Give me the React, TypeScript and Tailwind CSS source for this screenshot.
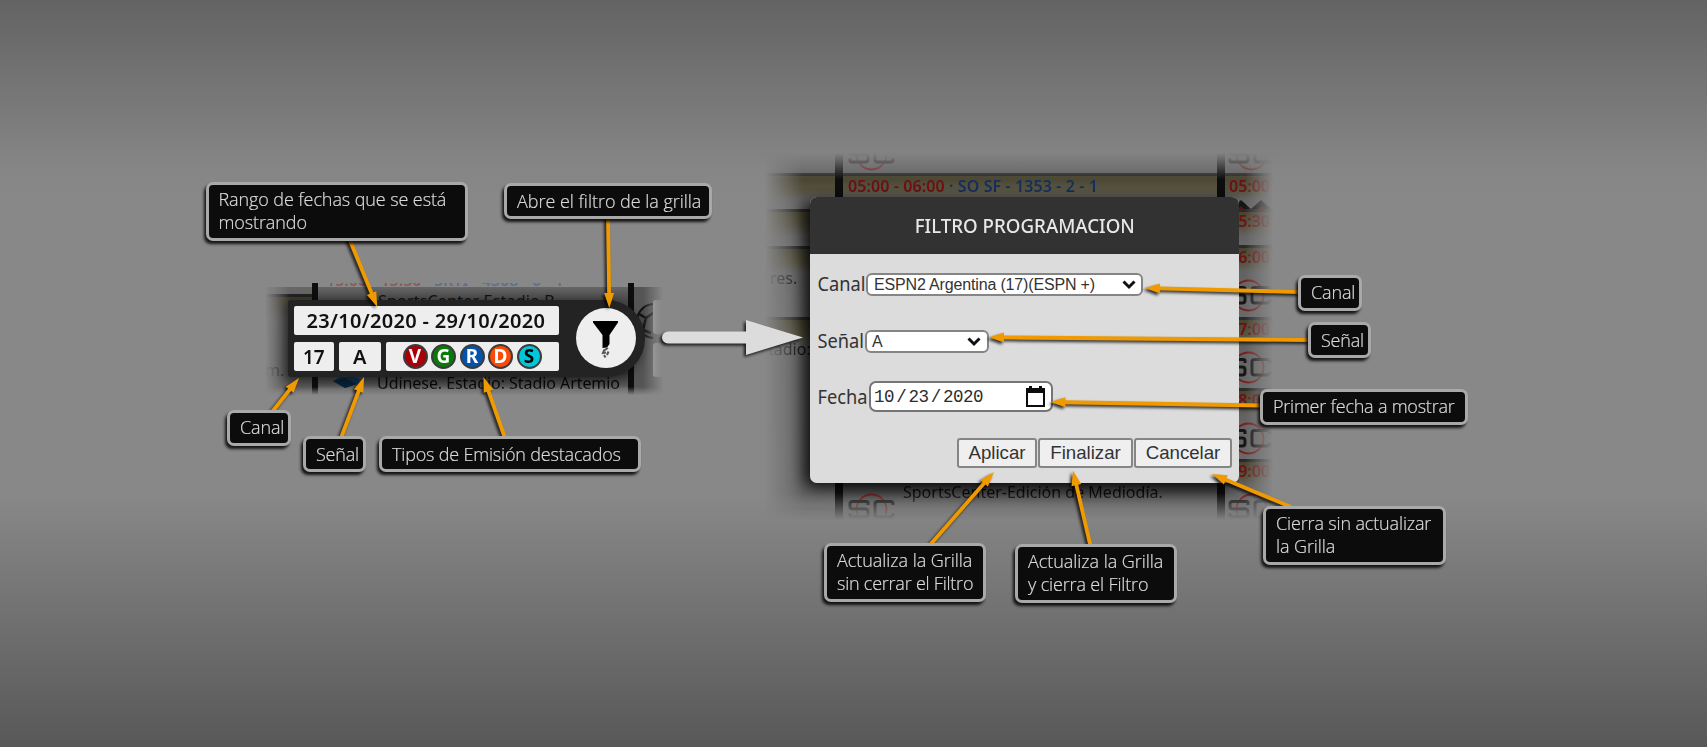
import type { ReactNode } from 'react';

const GRID_FONT = "font-['Noto_Sans',sans-serif]";

function Callout({ box, lines }: { box: string; lines: [string, string][] }) {
  return (
    <div
      className={`absolute overflow-hidden whitespace-nowrap rounded-[7px] border-[3px] border-[#a9a9a9] bg-[#0c0c0c] pl-[10px] font-['Open_Sans',sans-serif] text-[18px] font-light leading-[23px] text-[#dadada] [-webkit-text-stroke:0.2px_#dadada] shadow-[-2px_3px_3px_rgba(0,0,0,0.85)] ${box}`}
    >
      {lines.map(([text, tracking]) => (
        <p key={text} className={tracking}>
          {text}
        </p>
      ))}
    </div>
  );
}

function Arrow({ x1, y1, x2, y2 }: { x1: number; y1: number; x2: number; y2: number }) {
  const length = Math.hypot(x2 - x1, y2 - y1);
  const angle = (Math.atan2(y2 - y1, x2 - x1) * 180) / Math.PI;
  return (
    <g transform={`translate(${x1} ${y1}) rotate(${angle})`}>
      <path d={`M0 -1.9H${length - 15}V-5L${length} 0L${length - 15} 5V1.9H0Z`} fill="#f09a00" />
    </g>
  );
}

const arrows = [
  { x1: 349, y1: 238, x2: 377.3, y2: 307 },
  { x1: 608, y1: 217, x2: 609.3, y2: 308 },
  { x1: 272, y1: 412, x2: 299, y2: 378 },
  { x1: 341, y1: 438, x2: 364, y2: 377 },
  { x1: 505, y1: 438, x2: 483.5, y2: 377 },
  { x1: 1300, y1: 292, x2: 1145, y2: 288 },
  { x1: 1310, y1: 340, x2: 989, y2: 337.3 },
  { x1: 1262, y1: 405.5, x2: 1050.5, y2: 402 },
  { x1: 1291, y1: 507, x2: 1212, y2: 474 },
  { x1: 930, y1: 545, x2: 994, y2: 472 },
  { x1: 1090.5, y1: 546, x2: 1073, y2: 470.5 },
];

function ScLogo() {
  return (
    <svg width="48" height="33" viewBox="0 0 48 33" className="block shrink-0">
      <circle cx="23.5" cy="16.5" r="15" fill="none" stroke="#7a1c1c" strokeWidth="1.800" />
      <path
        d="M20 12V9.500Q20 8.500 18 8.500H5Q2 8.500 2 11V13.500Q2 16 5 16H17Q20 16 20 18.500V21.500Q20 24 17 24H4Q2 24 2 22.500V20.500M45 12V11Q45 8.500 42 8.500H30Q27 8.500 27 11V21.500Q27 24 30 24H42Q45 24 45 21.500V20.500"
        fill="none"
        stroke="#161616"
        strokeWidth="3"
      />
    </svg>
  );
}

function GridRow({ h, children }: { h: string; children?: ReactNode }) {
  return (
    <div
      className={`shrink-0 overflow-hidden border-t-[3px] border-[#2a2a2a] bg-[linear-gradient(#47432f,#55513f_14px,#626262_24px,#686868)] ${h}`}
    >
      {children}
    </div>
  );
}

function Chevron() {
  return (
    <svg width="14" height="10" viewBox="0 0 14 10" className="shrink-0 translate-y-px">
      <path d="M1.500 1.500L7 7L12.500 1.500" fill="none" stroke="#111" strokeWidth="3" />
    </svg>
  );
}

function RightBackdrop() {
  return (
    <div
      className={`absolute left-[765px] top-[153px] flex h-[367px] w-[509px] overflow-hidden whitespace-nowrap bg-[#636363] text-[16px] text-[#111] [mask-composite:intersect] [mask-image:linear-gradient(90deg,transparent,black_38px,black_480px,transparent_508px),linear-gradient(transparent,black_26px,black_340px,transparent)] ${GRID_FONT}`}
    >
      <div className="flex w-[70px] flex-col">
        <div className="h-[20px] shrink-0" />
        <GridRow h="h-[36px]" />
        <GridRow h="h-[37px]" />
        <GridRow h="h-[71px]">
          <p className="mt-[18px] pl-[5px] leading-[22px]">res.</p>
        </GridRow>
        <GridRow h="h-[190px]">
          <p className="mt-[18px] pl-[3px] leading-[22px]">tadio:</p>
        </GridRow>
      </div>
      <div className="w-[8px] shrink-0 bg-[#0d0d0d]" />
      <div className="flex w-[374px] flex-col">
        <div className="flex h-[20px] shrink-0 items-end overflow-hidden pb-[2px] pl-[5px]">
          <ScLogo />
        </div>
        <div className="h-[310px] shrink-0 border-t-[3px] border-[#2a2a2a] bg-[linear-gradient(#47432f,#5b5848_16px,#626262_24px,#666)]">
          <p className="-mt-px pl-[5px] text-[16px] font-semibold leading-[22px] tracking-[0.1px]">
            <span className="text-[#6d1010]">05:00 - 06:00</span>
            <span className="text-[#152f5c]"> · SO SF - 1353 - 2 - 1</span>
          </p>
        </div>
        <div className="flex h-[40px] shrink-0 gap-[7px] bg-[linear-gradient(#444,#666_26px)] pl-[5px]">
          <div className="mt-[10px]">
            <ScLogo />
          </div>
          <p className="-mt-[2px] leading-[22px] text-[#0a0a0a]">SportsCenter-Edición de Mediodía.</p>
        </div>
      </div>
      <div className="w-[8px] shrink-0 bg-[#0d0d0d]" />
      <div className="flex w-[49px] flex-col font-semibold leading-[22px] text-[#6d1010]">
        <div className="flex h-[20px] shrink-0 items-end overflow-hidden pb-[2px] pl-[3px]">
          <ScLogo />
        </div>
        <GridRow h="h-[36px]">
          <p className="-mt-px pl-[4px]">05:00</p>
          <svg width="44" height="10" viewBox="0 0 44 10" className="ml-[5px] mt-[3px]">
            <path d="M0 10L11 0L21 9L31 0L43 10Z" fill="#151515" />
            <path d="M7 10L11 6L15 10ZM27 10L31 6L35 10Z" fill="#5a1414" />
          </svg>
        </GridRow>
        <GridRow h="h-[36px]">
          <p className="-mt-[2px] pl-[4px]">05:30</p>
        </GridRow>
        <GridRow h="h-[72px]">
          <p className="-mt-[2px] pl-[4px]">06:00</p>
          <div className="mt-[11px]"><ScLogo /></div>
        </GridRow>
        <GridRow h="h-[71px]">
          <p className="-mt-[2px] pl-[4px]">07:00</p>
          <div className="mt-[11px]"><ScLogo /></div>
        </GridRow>
        <GridRow h="h-[71px]">
          <p className="-mt-[2px] pl-[4px]">08:00</p>
          <div className="mt-[11px]"><ScLogo /></div>
        </GridRow>
        <GridRow h="h-[71px]">
          <p className="-mt-[2px] pl-[4px]">09:00</p>
          <div className="mt-[11px] pl-[3px]"><ScLogo /></div>
        </GridRow>
      </div>
    </div>
  );
}

function LeftBackdrop() {
  return (
    <div
      className={`absolute left-[265px] top-[283px] flex h-[112px] w-[400px] overflow-hidden whitespace-nowrap text-[16px] text-[#111] [mask-composite:intersect] [mask-image:linear-gradient(90deg,transparent,black_25px,black_378px,transparent_398px),linear-gradient(black_104px,transparent)] ${GRID_FONT}`}
    >
      <div className="flex w-[47px] shrink-0 flex-col pt-[4px]">
        <div className="h-[7px] shrink-0 bg-[#666]" />
        <div className="flex-1 border-t-[3px] border-[#222] bg-[linear-gradient(#3f3a26,#505050_22px,#4e4e4e_80px,#666)]">
          <p className="mt-[62px] leading-[22px]">m.</p>
        </div>
      </div>
      <div className="w-[6px] shrink-0 bg-[#0d0d0d]" />
      <div className="flex w-[310px] shrink-0 flex-col">
        <div className="h-[4px] shrink-0 pl-[8px] font-semibold leading-[22px] [clip-path:inset(0_0_0_0)]">
          <p className="-mt-[14px] opacity-50">
            <span className="text-[#8d2f2f]">15:00 - 15:30</span>
            <span className="whitespace-pre text-[#36598d]"> · SKTI - 4308 - 0 - 1</span>
          </p>
        </div>
        <div className="h-[85px] shrink-0 bg-[linear-gradient(#666,#484848_14px,#444)]">
          <p className="pl-[60px] pt-[3px] leading-[22px] tracking-[0.2px]">SportsCenter Estadio B</p>
        </div>
        <div className="flex flex-1 items-start bg-[linear-gradient(#383838,#555_13px,#6c6c6c_17px)]">
          <svg width="28" height="20" viewBox="0 0 28 20" className="ml-[14px] mt-px shrink-0">
            <path d="M1 8L13 0L28 6L25 11L13 15Z" fill="#0b3658" />
            <path d="M1 8L13 5L25 11L13 15Z" fill="#0a2238" />
          </svg>
          <p className="pl-[17px] leading-[22px] tracking-[-0.06px] text-[#080808]">Udinese. Estadio: Stadio Artemio</p>
        </div>
      </div>
      <div className="w-[6px] shrink-0 bg-[#0d0d0d]" />
      <div className="flex w-[31px] flex-col">
        <div className="h-[4px] shrink-0" />
        <div className="flex flex-1 flex-col bg-[#555] pt-[13px]">
          <div className="flex">
            <svg width="19" height="40" viewBox="0 0 19 40" className="shrink-0">
              <circle cx="20" cy="21" r="17" fill="#4a4a4a" stroke="#111" strokeWidth="2" />
              <path d="M5 14L12 18L19 13M12 18L9 30M9 30L17 33" fill="none" stroke="#111" strokeWidth="2.500" />
            </svg>
            <div className="h-[34px] w-[12px] rounded-l-[3px] bg-[linear-gradient(90deg,#aaa,#888)]" />
          </div>
          <div className="ml-[19px] mt-[3px] h-[34px] w-[12px] shrink-0 rounded-l-[3px] bg-[linear-gradient(90deg,#aaa,#888)]" />
        </div>
      </div>
    </div>
  );
}

const badges = [
  { letter: 'V', colour: 'bg-[#a90008] text-white' },
  { letter: 'G', colour: 'bg-[#087a08] text-white' },
  { letter: 'R', colour: 'bg-[#0552ab] text-white' },
  { letter: 'D', colour: 'bg-[#fb4a06] text-white' },
  { letter: 'S', colour: 'bg-[#00c8da] text-black' },
];

function DateBar() {
  return (
    <div
      className={`absolute left-[288px] top-[300px] flex h-[77px] w-[357px] rounded-l-[3px] rounded-r-[38px] bg-[#232323] pl-[5.500px] pt-[6px] font-semibold text-[#111] shadow-[-3px_3px_12px_rgba(0,0,0,0.55)] ${GRID_FONT}`}
    >
      <div className="flex w-[265px] flex-col gap-[7px] text-[20px]">
        <div className="h-[29px] rounded-[2px] bg-[#eee] pl-[13px] leading-[30px] tracking-[0.3px]">23/10/2020 - 29/10/2020</div>
        <div className="flex h-[29px] gap-[5px] text-center leading-[29px]">
          <div className="w-[40.500px] rounded-[2px] bg-[#eee] text-[19px] leading-[30px]">17</div>
          <div className="w-[41.500px] rounded-[2px] bg-[#eee]">A</div>
          <div className="flex flex-1 items-center gap-[3.500px] rounded-[2px] bg-[#eee] pl-[17px]">
            {badges.map((b) => (
              <span
                key={b.letter}
                className={`flex size-[25px] items-center justify-center rounded-full border-2 border-[#3c3c3c] text-[19px] font-bold leading-none ${b.colour}`}
              >
                {b.letter}
              </span>
            ))}
          </div>
        </div>
      </div>
      <div className="ml-[17.500px] mt-[2px] flex size-[60px] justify-center rounded-full bg-[#eee]">
        <svg width="26" height="42" viewBox="0 0 26 42" className="mt-[13px]">
          <path d="M0 0H25V1.500L16.500 14V23L14 26.500L9.500 27V14L0 1.500Z" fill="#000" />
          <path d="M15 27L11 29.500L10 32L13 31.500M15.500 30.500L14 34M11 34L12.500 36.500" fill="none" stroke="#555" strokeWidth="2" />
        </svg>
      </div>
    </div>
  );
}

function FieldLabel({ children }: { children: string }) {
  return (
    <span className="w-[48px] shrink-0 origin-left translate-x-[0.500px] scale-x-[0.935] text-[19.500px] leading-[24px] text-[#333]">
      {children}
    </span>
  );
}

function FilterDialog() {
  return (
    <div
      className={`absolute left-[810px] top-[197px] flex h-[286px] w-[429px] flex-col overflow-hidden rounded-[7px] bg-[#dcdcdc] ${GRID_FONT}`}
    >
      <div className="flex h-[57px] shrink-0 items-center justify-center bg-[#323232]">
        <h1 className="scale-x-[0.935] text-[20px] font-medium text-[#e8e8e8]">FILTRO PROGRAMACION</h1>
      </div>
      <div className="flex flex-1 flex-col px-[7px]">
        <div className="mt-[18px] flex h-[24px] items-center">
          <FieldLabel>Canal</FieldLabel>
          <div className="ml-px flex h-[23px] w-[277px] items-center justify-between rounded-[6px] border-2 border-[#858585] bg-white pl-[6px] pr-[5px] font-['Liberation_Sans',sans-serif] text-[16px] tracking-[-0.16px] text-[#333]">
            <span className="translate-y-px">ESPN2 Argentina (17)(ESPN +)</span>
            <Chevron />
          </div>
        </div>
        <div className="mt-[33px] flex h-[24px] items-center">
          <FieldLabel>Señal</FieldLabel>
          <div className="flex h-[23px] w-[124px] items-center justify-between rounded-[6px] border-2 border-[#858585] bg-white pl-[5px] pr-[6px] font-['Liberation_Sans',sans-serif] text-[16px] text-[#333]">
            <span className="translate-y-px">A</span>
            <Chevron />
          </div>
        </div>
        <div className="mt-[28px] flex h-[31px] items-center">
          <FieldLabel>Fecha</FieldLabel>
          <div className="ml-[4px] flex h-[31px] w-[184px] items-center justify-between rounded-[7px] border-2 border-[#757575] bg-white pl-[3px] pr-[6px] font-['Liberation_Mono',monospace] text-[17.500px] tracking-[-0.5px] text-[#2c2c2c]">
            <span className="flex translate-y-px">
              10<span className="w-[14.500px] text-center">/</span>23<span className="w-[14.500px] text-center">/</span>2020
            </span>
            <svg width="19" height="21" viewBox="0 0 19 21">
              <path d="M3 0H6V2H13V0H16V2H19V21H0V2H3ZM2 7V19H17V7Z" fill="#0c0c0c" fillRule="evenodd" />
            </svg>
          </div>
        </div>
        <div className="mt-[26px] flex justify-end gap-px font-['Liberation_Sans',sans-serif] text-[18.670px] text-[#333]">
          <button className="h-[30px] w-[80px] rounded-[3px] border-2 border-[#858585] bg-[#efefef] leading-[26px]">Aplicar</button>
          <button className="h-[30px] w-[95px] rounded-[3px] border-2 border-[#858585] bg-[#efefef] leading-[26px]">Finalizar</button>
          <button className="h-[30px] w-[98px] rounded-[3px] border-2 border-[#858585] bg-[#efefef] leading-[26px]">Cancelar</button>
        </div>
      </div>
    </div>
  );
}

export default function App() {
  return (
    <main className="relative h-[747px] w-[1707px] overflow-hidden bg-[linear-gradient(#636363,#868686_170px,#888_200px,#888_495px,#585858)]">
      <LeftBackdrop />
      <RightBackdrop />
      <div className="absolute left-[810px] top-[197px] h-[286px] w-[429px] rounded-[7px] shadow-[-6px_5px_16px_rgba(0,0,0,0.9)] [clip-path:inset(-10px_0_-32px_-32px)]" />
      <DateBar />
      <FilterDialog />
      <svg
        className="absolute inset-0 [filter:drop-shadow(-1.500px_2px_1.500px_rgba(0,0,0,0.8))]"
        width="1707"
        height="747"
        viewBox="0 0 1707 747"
      >
        <path d="M668 331.500H746V320L803 337.500L746 355V343.500H668A6 6 0 0 1 668 331.500Z" fill="#dcdcdc" />
        {arrows.map((a) => (
          <Arrow key={`${a.x1}-${a.y1}`} {...a} />
        ))}
      </svg>
      <Callout box="left-[205.5px] top-[182px] h-[58.5px] w-[262px] pt-[3px]" lines={[['Rango de fechas que se está', 'tracking-[-0.1px]'], ['mostrando', 'tracking-[-0.1px]']]} />
      <Callout box="left-[504px] top-[183px] h-[36px] w-[208px] pt-[4px]" lines={[['Abre el filtro de la grilla', 'tracking-[-0.03px]']]} />
      <Callout box="left-[227px] top-[410px] h-[36px] w-[64px] pt-[3px]" lines={[['Canal', 'tracking-[-0.15px]']]} />
      <Callout box="left-[303px] top-[436px] h-[36px] w-[63px] pt-[4px]" lines={[['Señal', 'tracking-[-0.2px]']]} />
      <Callout box="left-[379px] top-[436px] h-[36px] w-[262px] pt-[4px]" lines={[['Tipos de Emisión destacados', 'tracking-[-0.18px]']]} />
      <Callout box="left-[1298px] top-[275px] h-[36px] w-[64px] pt-[3px]" lines={[['Canal', 'tracking-[-0.15px]']]} />
      <Callout box="left-[1308px] top-[322px] h-[36px] w-[63px] pt-[4px]" lines={[['Señal', 'tracking-[-0.2px]']]} />
      <Callout box="left-[1260px] top-[389px] h-[36px] w-[208px] pt-[3px]" lines={[['Primer fecha a mostrar', 'tracking-[-0.22px]']]} />
      <Callout box="left-[1263px] top-[506px] h-[59px] w-[183px] pt-[3px]" lines={[['Cierra sin actualizar', 'tracking-[-0.15px]'], ['la Grilla', 'tracking-[-0.1px]']]} />
      <Callout box="left-[824px] top-[543px] h-[59px] w-[162px] pt-[3px]" lines={[['Actualiza la Grilla', 'tracking-[-0.05px]'], ['sin cerrar el Filtro', 'tracking-[-0.23px]']]} />
      <Callout box="left-[1015px] top-[544px] h-[59px] w-[162px] pt-[3px]" lines={[['Actualiza la Grilla', 'tracking-[-0.05px]'], ['y cierra el Filtro', 'tracking-[-0.15px]']]} />
    </main>
  );
}
